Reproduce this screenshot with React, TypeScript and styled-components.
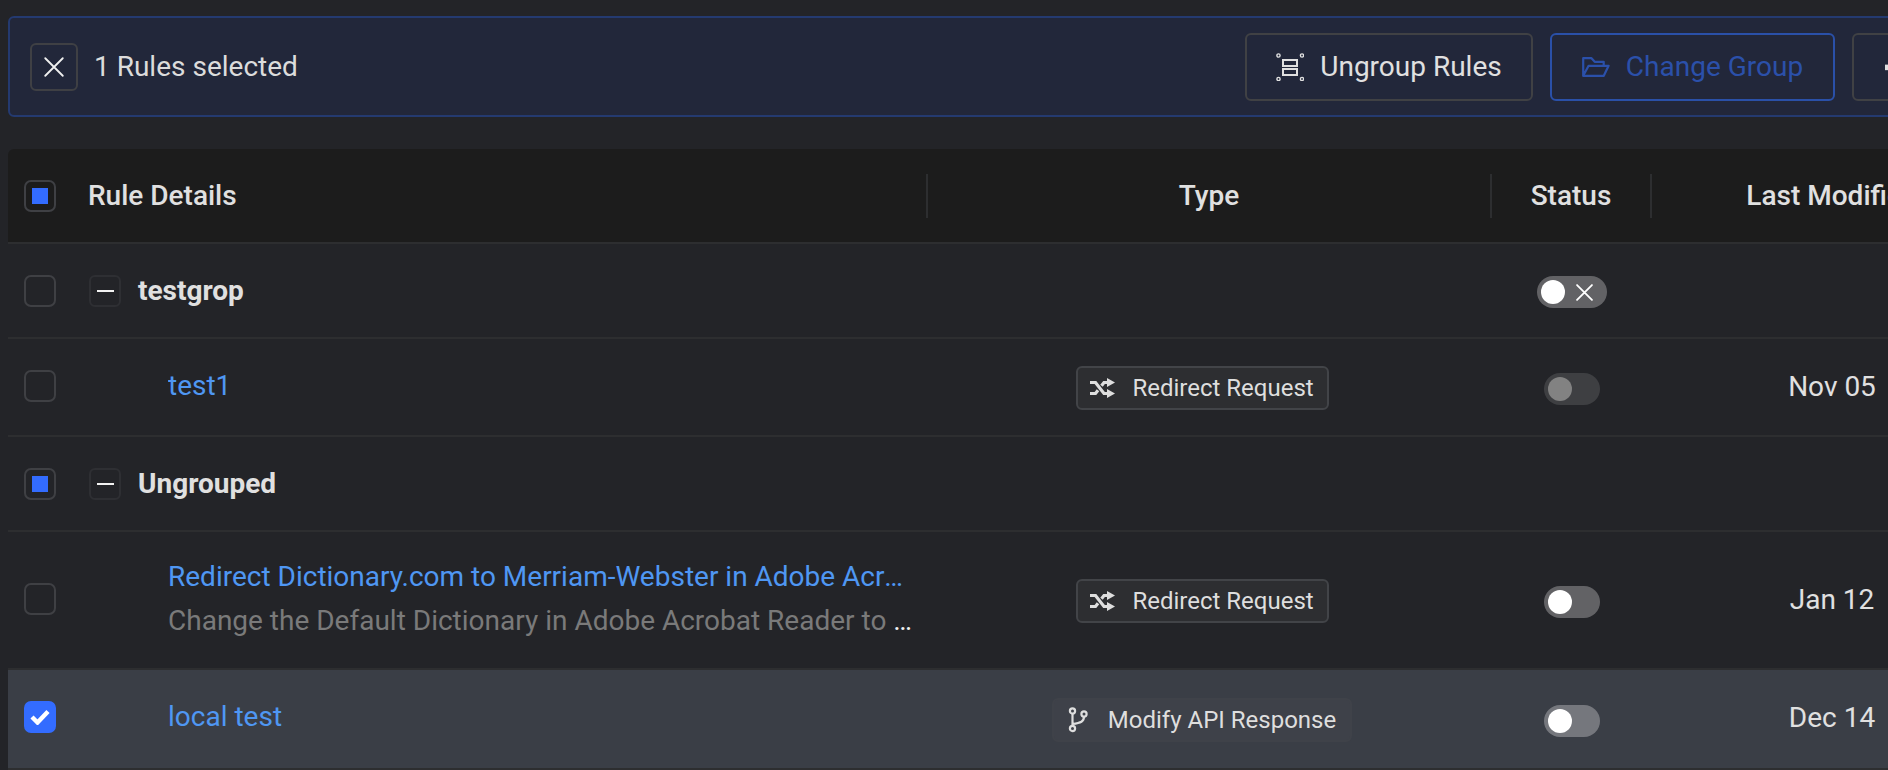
import React from "react";
import styled, { createGlobalStyle } from "styled-components";

const Global = createGlobalStyle`
  html, body { margin: 0; padding: 0; background: #232428; overflow: hidden; }
  body { width: 1888px; height: 770px; font-family: Roboto, "Liberation Sans", sans-serif; color: #e6e6e6; }
`;

const Page = styled.div`
  width: 1888px;
  height: 770px;
  overflow: hidden;
  padding: 16px 0 0 8px;
  box-sizing: border-box;
  background: #232428;
`;

const SelectionBar = styled.div`
  width: 1920px;
  height: 101px;
  box-sizing: border-box;
  display: flex;
  align-items: center;
  padding: 0 20px;
  border: 2px solid #243a70;
  border-radius: 6px;
  background: #22273a;
`;

const CloseBox = styled.button`
  width: 48px;
  height: 48px;
  padding: 0;
  flex: none;
  display: flex;
  align-items: center;
  justify-content: center;
  border: 2px solid #3f4044;
  border-radius: 6px;
  background: transparent;
  color: #f0f0f0;
`;

const SelectedText = styled.span`
  margin-left: 16px;
  font-size: 28px;
  color: #dcdcdc;
`;

const BarActions = styled.div`
  margin-left: auto;
  display: flex;
  gap: 17px;
`;

const ActionButton = styled.button<{ $primary?: boolean; $w: number }>`
  width: ${(p) => p.$w}px;
  height: 68px;
  box-sizing: border-box;
  display: flex;
  align-items: center;
  justify-content: center;
  gap: 16px;
  padding: 0;
  border: 2px solid ${(p) => (p.$primary ? "#2a50a8" : "#404144")};
  border-radius: 6px;
  background: transparent;
  color: ${(p) => (p.$primary ? "#2b50aa" : "#e0e0e0")};
  font-family: Roboto, sans-serif;
  font-size: 28px;
  flex: none;
`;

const IconOnlyButton = styled(ActionButton)`
  justify-content: flex-start;
  padding-left: 31px;
`;

const Table = styled.div`
  margin-top: 32px;
  width: 2004px;
`;

const cols = "grid-template-columns: 920px 564px 160px 360px;";

const HeaderRow = styled.div`
  display: grid;
  ${cols}
  height: 95px;
  box-sizing: border-box;
  align-items: center;
  background: #1c1c1c;
  border-bottom: 2px solid #2d2e30;
  border-radius: 6px 6px 0 0;
  font-size: 28px;
  font-weight: 500;
  color: #e0e0e0;
`;

const HeadCell = styled.div<{ $divider?: boolean; $center?: boolean }>`
  height: 44px;
  display: flex;
  align-items: center;
  box-sizing: border-box;
  justify-content: ${(p) => (p.$center ? "center" : "flex-start")};
  border-right: ${(p) => (p.$divider ? "2px solid #2d2e30" : "none")};
  white-space: nowrap;
`;

const HeadLabel = styled.span`
  margin-left: 32px;
`;

const Row = styled.div<{ $h: number; $selected?: boolean }>`
  display: grid;
  ${cols}
  height: ${(p) => p.$h}px;
  box-sizing: border-box;
  align-items: center;
  border-bottom: 2px solid #2d2e30;
  background: ${(p) => (p.$selected ? "#3a3e46" : "transparent")};
`;

const DetailCell = styled.div<{ $lift?: number }>`
  display: flex;
  align-items: center;
  padding-left: 16px;
  padding-bottom: ${(p) => p.$lift ?? 0}px;
  min-width: 0;
`;

const CheckFrame = styled.span<{ $checked?: boolean }>`
  width: 32px;
  height: 32px;
  flex: none;
  box-sizing: border-box;
  display: flex;
  align-items: center;
  justify-content: center;
  border-radius: 7px;
  border: 2px solid ${(p) => (p.$checked ? "#336cff" : "#3f4044")};
  background: ${(p) => (p.$checked ? "#336cff" : "transparent")};
`;

const CheckFill = styled.span`
  width: 16px;
  height: 16px;
  background: #336cff;
`;

const Expander = styled.span`
  width: 32px;
  height: 32px;
  margin-left: 33px;
  flex: none;
  box-sizing: border-box;
  display: flex;
  align-items: center;
  justify-content: center;
  border: 2px solid #2e2f33;
  border-radius: 6px;
`;

const Dash = styled.span`
  width: 17px;
  height: 2px;
  background: #f2f2f2;
`;

const GroupName = styled.span`
  margin-left: 17px;
  font-size: 28px;
  font-weight: 700;
  color: #e0e0e0;
`;

const RuleText = styled.div`
  margin-left: 112px;
  min-width: 0;
  width: 744px;
`;

const RuleName = styled.div`
  font-size: 28px;
  line-height: 44px;
  color: #4f97f3;
  white-space: nowrap;
  overflow: hidden;
  text-overflow: ellipsis;
`;

const RuleDescClip = styled.div`
  width: 750px;
  font-size: 28px;
  line-height: 44px;
  color: #f0f0f0;
  white-space: nowrap;
  overflow: hidden;
  text-overflow: ellipsis;
`;

const RuleDesc = styled.span`
  color: #7a7a7a;
`;

const TypeCell = styled.div`
  display: flex;
  justify-content: center;
  padding: 2px 16px 0 0;
`;

const Tag = styled.span<{ $onSelected?: boolean; $w: number }>`
  width: ${(p) => p.$w}px;
  height: 44px;
  box-sizing: border-box;
  display: flex;
  align-items: center;
  justify-content: center;
  gap: 17px;
  border: 2px solid ${(p) => (p.$onSelected ? "#3f4249" : "#424448")};
  border-radius: 6px;
  background: ${(p) => (p.$onSelected ? "#3e4149" : "#2d2e31")};
  font-size: 24px;
  color: #dedede;
`;

const StatusCell = styled.div`
  display: flex;
  justify-content: center;
  padding-top: 3px;
`;

const Toggle = styled.span<{ $bg: string; $w: number }>`
  width: ${(p) => p.$w}px;
  height: 32px;
  box-sizing: border-box;
  padding: 0 4px;
  display: flex;
  align-items: center;
  gap: 11px;
  border-radius: 16px;
  background: ${(p) => p.$bg};
  color: #fff;
`;

const Knob = styled.span<{ $dim?: boolean }>`
  width: 24px;
  height: 24px;
  flex: none;
  border-radius: 50%;
  background: ${(p) => (p.$dim ? "#828282" : "#fff")};
`;

const DateCell = styled.div<{ $lift?: number }>`
  font-size: 28px;
  color: #e0e0e0;
  text-align: center;
  padding-bottom: ${(p) => p.$lift ?? 0}px;
`;

const X = ({ s }: { s: number }) => (
  <svg width={s} height={s} viewBox="0 0 24 24" fill="none" stroke="currentColor" strokeWidth={(24 / s) * 1.8} strokeLinecap="round">
    <path d="M1.5 1.5l21 21M22.5 1.5l-21 21" />
  </svg>
);

const UngroupIcon = () => (
  <svg width="28" height="28" viewBox="0 0 28 28" fill="none" stroke="currentColor" strokeWidth="2">
    <circle cx="2.5" cy="2.500" r="1.6" strokeWidth="1.4" />
    <circle cx="26" cy="2.500" r="1.6" strokeWidth="1.4" />
    <circle cx="2.5" cy="26" r="1.6" strokeWidth="1.4" />
    <circle cx="26" cy="26" r="1.6" strokeWidth="1.4" />
    <rect x="7" y="7" width="14" height="6" />
    <rect x="7" y="16" width="14" height="6" />
  </svg>
);

const FolderIcon = () => (
  <svg width="28" height="20" viewBox="0 0 28 20" fill="none" stroke="currentColor" strokeWidth="2.2" strokeLinejoin="round">
    <path d="M1.2 18.8V1.2h8.3l3.2 3.6h9v4M1.2 18.8h20.6l4.8-10H6.6L1.2 18.8z" />
  </svg>
);

const ClippedGlyph = () => (
  <svg width="24" height="24" viewBox="0 0 24 24" fill="#e0e0e0">
    <path d="M0 9h4v7H0z" />
  </svg>
);

const ShuffleIcon = () => (
  <svg width="25" height="20" viewBox="0 0 25 20" fill="none" stroke="currentColor" strokeWidth="3.2">
    <path d="M0 4.5h5.5L14 15.5h5M0 15.5h5.5L8 12.3M11.5 7.7 14 4.5h5" />
    <path d="M17 0l8 4.5-8 4.5zM17 11l8 4.5-8 4.5z" fill="currentColor" stroke="none" />
  </svg>
);

const BranchIcon = () => (
  <svg width="23" height="26" viewBox="0 0 23 26" fill="none" stroke="currentColor" strokeWidth="2.2">
    <circle cx="4.5" cy="4" r="2.6" />
    <circle cx="4.5" cy="21.5" r="2.6" />
    <circle cx="16" cy="7" r="2.6" />
    <path d="M4.5 6.6v12.3M16 9.6c0 5-3 6.400-11.500 7.400" />
  </svg>
);

const Check = () => (
  <svg width="20" height="16" viewBox="0 0 20 16" fill="none" stroke="#fff" strokeWidth="4.4">
    <path d="M2 8l5.500 5.500L18 2.500" />
  </svg>
);

export default function App() {
  return (
    <Page>
      <Global />
      <SelectionBar>
        <CloseBox><X s={20} /></CloseBox>
        <SelectedText>1 Rules selected</SelectedText>
        <BarActions>
          <ActionButton $w={288}><UngroupIcon />Ungroup Rules</ActionButton>
          <ActionButton $w={285} $primary><FolderIcon />Change Group</ActionButton>
          <IconOnlyButton $w={54}><ClippedGlyph /></IconOnlyButton>
        </BarActions>
      </SelectionBar>
      <Table>
        <HeaderRow>
          <HeadCell $divider>
            <DetailCell><CheckFrame><CheckFill /></CheckFrame></DetailCell>
            <HeadLabel>Rule Details</HeadLabel>
          </HeadCell>
          <HeadCell $divider $center>Type</HeadCell>
          <HeadCell $divider $center>Status</HeadCell>
          <HeadCell $center>Last Modified</HeadCell>
        </HeaderRow>
        <Row $h={95}>
          <DetailCell><CheckFrame /><Expander><Dash /></Expander><GroupName>testgrop</GroupName></DetailCell>
          <div />
          <StatusCell><Toggle $bg="#626265" $w={70}><Knob /><X s={17} /></Toggle></StatusCell>
          <div />
        </Row>
        <Row $h={98}>
          <DetailCell $lift={2}><CheckFrame /><RuleText><RuleName>test1</RuleName></RuleText></DetailCell>
          <TypeCell><Tag $w={253}><ShuffleIcon />Redirect Request</Tag></TypeCell>
          <StatusCell><Toggle $bg="#3e3f42" $w={56}><Knob $dim /></Toggle></StatusCell>
          <DateCell $lift={2}>Nov 05</DateCell>
        </Row>
        <Row $h={95}>
          <DetailCell><CheckFrame><CheckFill /></CheckFrame><Expander><Dash /></Expander><GroupName>Ungrouped</GroupName></DetailCell>
          <div />
          <div />
          <div />
        </Row>
        <Row $h={138}>
          <DetailCell $lift={2}>
            <CheckFrame />
            <RuleText>
              <RuleName>Redirect Dictionary.com to Merriam-Webster in Adobe Acrobat Reader</RuleName>
              <RuleDescClip><RuleDesc>Change the Default Dictionary in Adobe Acrobat Reader to Merriam-Webster</RuleDesc></RuleDescClip>
            </RuleText>
          </DetailCell>
          <TypeCell><Tag $w={253}><ShuffleIcon />Redirect Request</Tag></TypeCell>
          <StatusCell><Toggle $bg="#626265" $w={56}><Knob /></Toggle></StatusCell>
          <DateCell $lift={1}>Jan 12</DateCell>
        </Row>
        <Row $h={100} $selected>
          <DetailCell $lift={4}><CheckFrame $checked><Check /></CheckFrame><RuleText><RuleName>local test</RuleName></RuleText></DetailCell>
          <TypeCell><Tag $w={300} $onSelected><BranchIcon />Modify API Response</Tag></TypeCell>
          <StatusCell><Toggle $bg="#75777d" $w={56}><Knob /></Toggle></StatusCell>
          <DateCell $lift={4}>Dec 14</DateCell>
        </Row>
      </Table>
    </Page>
  );
}
